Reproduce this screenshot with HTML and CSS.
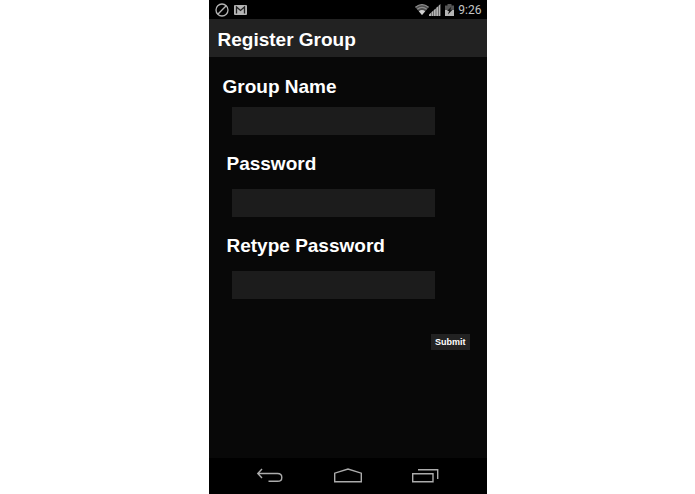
FILE: index.html
```html
<!DOCTYPE html>
<html lang="en">
<head>
    <meta charset="UTF-8">
    <meta name="viewport" content="width=device-width, initial-scale=1.0">
    <title>Register Group</title>
    <link rel="stylesheet" href="styles.css">
</head>
<body>
    <div class="phone">
        <div class="status-bar">
            <svg class="status-icon" width="14" height="14" viewBox="0 0 14 14" fill="none" stroke="#b4b4b4" stroke-width="1.3">
                <circle cx="7" cy="7" r="6"/>
                <path d="M2.8 11.2L11.2 2.8"/>
            </svg>
            <svg class="status-icon" width="13" height="10" viewBox="0 0 13 10">
                <rect width="13" height="10" rx="1" fill="#b4b4b4"/>
                <path d="M2.5 8.5V2L6.5 5.5L10.5 2V8.5" fill="none" stroke="#222" stroke-width="1.3"/>
            </svg>
            <div class="status-right">
                <svg width="14" height="11" viewBox="0 0 14 11">
                    <path d="M0 3Q7-2.5 14 3L7 11Z" fill="#4c4c4c"/>
                    <path d="M0.5 3.2Q7-1.8 13.5 3.2M2.3 5.3Q7 1.6 11.7 5.3" fill="none" stroke="#8c8c8c" stroke-width="1.2"/>
                    <path d="M3.8 7.2Q7 4.8 10.2 7.2L7 11Z" fill="#d0d0d0"/>
                </svg>
                <svg width="12" height="12" viewBox="0 0 12 12">
                    <path d="M0 12V10.5L2 8.8V12ZM2.4 12V8.2L4.4 6.5V12ZM4.8 12V6L6.8 4.4V12ZM7.2 12V3.8L9.2 2.2V12ZM9.6 12V1.7L11.4 0V12Z" fill="#b4b4b4"/>
                </svg>
                <svg class="battery" width="9" height="12" viewBox="0 0 9 12">
                    <path d="M2.5 0H6.5V1.5H9V7H0V1.5H2.5Z" fill="#555"/>
                    <path d="M0 6H9V12H0Z" fill="#b4b4b4"/>
                    <path d="M6.5 2.5L2 7H4L3 10.5L7.5 5.8H5.2Z" fill="#111"/>
                </svg>
                <span class="clock">9:26</span>
            </div>
        </div>

        <header class="title-bar">
            <h1>Register Group</h1>
        </header>

        <form class="register-form">
            <div class="field field-first">
                <label for="groupName">Group Name</label>
                <input type="text" id="groupName">
            </div>
            <div class="field">
                <label for="password">Password</label>
                <input type="password" id="password">
            </div>
            <div class="field">
                <label for="retypePassword">Retype Password</label>
                <input type="password" id="retypePassword">
            </div>
            <button type="submit">Submit</button>
        </form>

        <nav class="nav-bar">
            <button type="button" aria-label="Back">
                <svg width="28" height="16" viewBox="0 0 28 16" fill="none" stroke="#acacac" stroke-width="1.4">
                    <path d="M6 1L1.8 5.5L6 10M1.8 5.5H21.5Q25.8 5.5 25.8 9.4Q25.8 13.3 21.5 13.3H12.5"/>
                </svg>
            </button>
            <button type="button" aria-label="Home">
                <svg width="28" height="16" viewBox="0 0 28 16" fill="none" stroke="#acacac" stroke-width="1.4">
                    <path d="M0.7 13.7V5.2L14 1L27.3 5.2V13.7Z"/>
                </svg>
            </button>
            <button type="button" aria-label="Recent apps">
                <svg width="28" height="16" viewBox="0 0 28 16" fill="none" stroke="#acacac" stroke-width="1.4">
                    <path d="M0.7 5.7H21V13.7H0.7ZM6 1.7H25.7V11"/>
                </svg>
            </button>
        </nav>
    </div>
</body>
</html>
```
FILE: styles.css
```css
* {
    box-sizing: border-box;
}
body {
    margin: 0;
    background-color: #fff;
    color: #fff;
    font-family: "Liberation Sans", Arial, sans-serif;
}
.phone {
    display: flex;
    flex-direction: column;
    width: 40%;
    min-width: 240px;
    min-height: 100vh;
    margin: 0 auto;
    background-color: #080808;
}
.status-bar {
    display: flex;
    align-items: center;
    gap: 5px;
    height: 19px;
    padding: 0 5px 0 6px;
    background-color: #000;
}
.status-right {
    display: flex;
    align-items: center;
    margin-left: auto;
}
.battery {
    margin: 0 4px;
}
.clock {
    color: #c4c4c4;
    font-family: Roboto, sans-serif;
    font-size: 12px;
    line-height: 18px;
}
.title-bar {
    padding: 9px 9px 5px;
    background-color: #222;
}
h1 {
    margin: 0;
    font-size: 19px;
    line-height: 24px;
}
.register-form {
    display: flex;
    flex: 1;
    flex-direction: column;
    gap: 17px;
    padding: 18px 17px 18px 15px;
}
.field {
    display: flex;
    flex-direction: column;
    gap: 13px;
    padding: 0 35px 0 8px;
}
.field-first {
    gap: 8px;
}
label {
    margin-left: -5px;
    font-size: 19px;
    font-weight: bold;
    line-height: 24px;
}
.field-first label {
    margin-left: -9px;
}
input {
    width: 100%;
    height: 28px;
    padding: 0 6px;
    border: none;
    background-color: #1c1c1c;
    color: #fff;
    font-size: 14px;
}
button {
    border: none;
    cursor: pointer;
}
.register-form button {
    align-self: flex-end;
    margin-top: 18px;
    padding: 0 4px;
    background-color: #222;
    color: #fff;
    font-family: inherit;
    font-size: 9px;
    font-weight: bold;
    line-height: 16px;
}
.nav-bar {
    display: flex;
    justify-content: center;
    align-items: center;
    gap: 50px;
    height: 36px;
    background-color: #000;
}
.nav-bar button {
    display: flex;
    padding: 0;
    background: none;
}
```
